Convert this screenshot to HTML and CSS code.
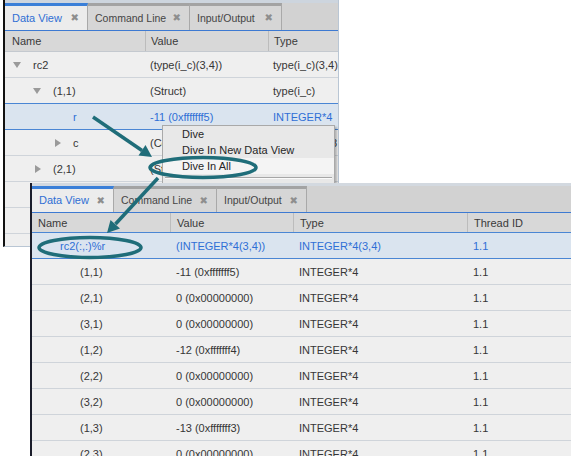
FILE: index.html
```html
<!DOCTYPE html>
<html>
<head>
<meta charset="utf-8">
<link rel="stylesheet" href="styles.css">
</head>
<body>
<div class="desk">
  <section class="win win-top">
    <div class="tabs">
      <div class="tab active w83"><span class="label">Data View</span><span class="x">&#x2716;</span></div>
      <div class="tab w102"><span class="label">Command Line</span><span class="x">&#x2716;</span></div>
      <div class="tab w92"><span class="label">Input/Output</span><span class="x">&#x2716;</span></div>
    </div>
    <div class="grid cols-top">
      <div class="row head"><div class="c name">Name</div><div class="c">Value</div><div class="c">Type</div></div>
      <div class="row"><div class="c name l0"><span class="tog"><i class="down"></i></span>rc2</div><div class="c">(type(i_c)(3,4))</div><div class="c">type(i_c)(3,4)</div></div>
      <div class="row"><div class="c name l1"><span class="tog"><i class="down"></i></span>(1,1)</div><div class="c">(Struct)</div><div class="c">type(i_c)</div></div>
      <div class="row sel"><div class="c name l2"><span class="tog"></span>r</div><div class="c">-11 (0xfffffff5)</div><div class="c">INTEGER*4</div></div>
      <div class="row"><div class="c name l2"><span class="tog"><i class="right"></i></span>c</div><div class="c">(Complex)</div><div class="c">COMPLEX*8</div></div>
      <div class="row"><div class="c name l1"><span class="tog"><i class="right"></i></span>(2,1)</div><div class="c">(Struct)</div><div class="c">type(i_c)</div></div>
      <div class="row"><div class="c name l1"><span class="tog"><i class="right"></i></span>(3,1)</div><div class="c">(Struct)</div><div class="c">type(i_c)</div></div>
      <div class="row"><div class="c name l1"><span class="tog"><i class="right"></i></span>(1,2)</div><div class="c">(Struct)</div><div class="c">type(i_c)</div></div>
      <div class="row"><div class="c name l1"><span class="tog"><i class="right"></i></span>(2,2)</div><div class="c">(Struct)</div><div class="c">type(i_c)</div></div>
    </div>
  </section>

  <div class="menu">
    <div class="item">Dive</div>
    <div class="item">Dive In New Data View</div>
    <div class="item hot">Dive In All</div>
    <div class="sep"></div>
    <div class="item">Dive in Nested</div>
  </div>

  <section class="win win-bottom">
    <div class="tabs">
      <div class="tab active w82"><span class="label">Data View</span><span class="x">&#x2716;</span></div>
      <div class="tab w103"><span class="label">Command Line</span><span class="x">&#x2716;</span></div>
      <div class="tab w90"><span class="label">Input/Output</span><span class="x">&#x2716;</span></div>
    </div>
    <div class="grid cols-bottom">
      <div class="row head"><div class="c name">Name</div><div class="c">Value</div><div class="c">Type</div><div class="c">Thread ID</div></div>
      <div class="row sel"><div class="c name b0">rc2(:,:)%r</div><div class="c">(INTEGER*4(3,4))</div><div class="c">INTEGER*4(3,4)</div><div class="c">1.1</div></div>
      <div class="row"><div class="c name b1">(1,1)</div><div class="c">-11 (0xfffffff5)</div><div class="c">INTEGER*4</div><div class="c">1.1</div></div>
      <div class="row"><div class="c name b1">(2,1)</div><div class="c">0 (0x00000000)</div><div class="c">INTEGER*4</div><div class="c">1.1</div></div>
      <div class="row"><div class="c name b1">(3,1)</div><div class="c">0 (0x00000000)</div><div class="c">INTEGER*4</div><div class="c">1.1</div></div>
      <div class="row"><div class="c name b1">(1,2)</div><div class="c">-12 (0xfffffff4)</div><div class="c">INTEGER*4</div><div class="c">1.1</div></div>
      <div class="row"><div class="c name b1">(2,2)</div><div class="c">0 (0x00000000)</div><div class="c">INTEGER*4</div><div class="c">1.1</div></div>
      <div class="row"><div class="c name b1">(3,2)</div><div class="c">0 (0x00000000)</div><div class="c">INTEGER*4</div><div class="c">1.1</div></div>
      <div class="row"><div class="c name b1">(1,3)</div><div class="c">-13 (0xfffffff3)</div><div class="c">INTEGER*4</div><div class="c">1.1</div></div>
      <div class="row"><div class="c name b1">(2,3)</div><div class="c">0 (0x00000000)</div><div class="c">INTEGER*4</div><div class="c">1.1</div></div>
    </div>
  </section>

  <svg class="annot" width="571" height="456" viewBox="0 0 571 456">
    <g fill="none" stroke="#1f6d79" stroke-width="3.5">
      <line x1="93" y1="117" x2="142" y2="150.5"/>
      <ellipse cx="203" cy="167.5" rx="53" ry="10"/>
      <line x1="158" y1="178" x2="115.5" y2="224"/>
      <ellipse cx="90" cy="247.5" rx="51" ry="10"/>
    </g>
    <g fill="#1f6d79">
      <polygon points="152,157 138.5,155.5 145.5,145"/>
      <polygon points="107,233 110.5,220 120,228.5"/>
    </g>
  </svg>
</div>
</body>
</html>
```

FILE: styles.css
```css
* { box-sizing: border-box; }
html, body { margin: 0; padding: 0; background: #ffffff; }
body {
  font-family: "Liberation Sans", Arial, sans-serif;
  font-size: 11px;
  color: #363636;
}
.desk {
  position: relative;
  width: 571px;
  height: 456px;
  overflow: hidden;
  background: #ffffff;
}

/* windows */
.win {
  position: absolute;
  overflow: hidden;
  background: #cdd5de;
  padding-top: 3px;
  display: flex;
  flex-direction: column;
}
.win-top {
  left: 3px;
  top: 0;
  width: 336px;
  height: 247px;
  border-left: 2px solid #111111;
  border-right: 1px solid #b9c6d4;
  border-bottom: 1px solid #b9c6d4;
}
.win-bottom {
  left: 30px;
  top: 183px;
  width: 541px;
  height: 273px;
  border-left: 2px solid #1a1c2a;
  background: #d3d9e0;
}

/* tabs */
.tabs {
  display: flex;
  height: 28px;
  flex: none;
  background: #d2d2d2;
  border-bottom: 1px solid #3d7ad2;
}
.win-bottom .tabs { height: 27px; }
.tab {
  display: flex;
  align-items: center;
  justify-content: space-between;
  padding: 0 8px 1px 7px;
  background: #d6d6d6;
  border-top: 3px solid #a3a3a3;
  border-right: 1px solid #a9a9a9;
  color: #454545;
  font-size: 10.5px;
}
.tab.active {
  background: #ececec;
  border-top-color: #3a7fd8;
  color: #2f6fd4;
  font-size: 11px;
}
.tab .x {
  font-family: "DejaVu Sans", sans-serif;
  font-size: 10px;
  color: #8e8e8e;
}
.w83 { width: 83px; }
.w102 { width: 102px; }
.w92 { width: 92px; }
.w82 { width: 82px; }
.w103 { width: 103px; }
.w90 { width: 90px; }

/* grid */
.grid {
  flex: 1;
  background: #efefef;
}
.row {
  display: grid;
  height: 26px;
  align-items: center;
  border-bottom: 1px solid #cfd4da;
  background: #efefef;
  white-space: nowrap;
}
.cols-top .row { grid-template-columns: 140px 123px 1fr; }
.cols-bottom .row { grid-template-columns: 138px 123px 174px 1fr; }
.row.head {
  height: 21px;
  background: #d8d8d8;
  border-bottom: 1px solid #c4c9cf;
  color: #3a3a3a;
  align-items: stretch;
}
.cols-bottom .row.head { height: 20px; border-bottom-color: #3d7ad2; }
.row.head .c {
  display: flex;
  align-items: center;
  border-left: 1px solid #bcbcbc;
}
.row.head .c.name { border-left: none; }
.c {
  padding-left: 5px;
  overflow: hidden;
  line-height: 16px;
}
.cols-bottom .c { padding-left: 6px; }
.c.name { padding-left: 7px; display: flex; align-items: center; }
.cols-bottom .c.name { padding-left: 6px; }

.row.sel {
  background: #dae4ef;
  border-bottom-color: #4a86d4;
  box-shadow: 0 -1px 0 #4a86d4;
  color: #2f6fd6;
}

/* tree indent */
.l0 { padding-left: 8px !important; }
.l1 { padding-left: 28px !important; }
.l2 { padding-left: 48px !important; }
.b0 { padding-left: 28px !important; }
.b1 { padding-left: 48px !important; }
.tog {
  display: inline-flex;
  align-items: center;
  width: 20px;
  height: 10px;
  flex: none;
}
.down {
  width: 0;
  height: 0;
  border-left: 4.5px solid transparent;
  border-right: 4.5px solid transparent;
  border-top: 6px solid #9a9a9a;
}
.right {
  width: 0;
  height: 0;
  margin-left: 2px;
  border-top: 4.5px solid transparent;
  border-bottom: 4.5px solid transparent;
  border-left: 6px solid #9a9a9a;
}

/* context menu */
.menu {
  position: absolute;
  left: 162px;
  top: 125px;
  width: 173px;
  height: 80px;
  background: #e8e8e8;
  border: 1px solid #a9a9a9;
  box-shadow: 2px 2px 2px rgba(0, 0, 0, 0.25);
  color: #262626;
  font-size: 11px;
}
.item {
  height: 16px;
  line-height: 16px;
  padding-left: 19px;
}
.item.hot { background: #f4f4f4; }
.sep {
  margin: 3px 2px 3px 2px;
  height: 2px;
  border-top: 1px solid #a6a6a6;
  border-bottom: 1px solid #fafafa;
}

.annot {
  position: absolute;
  left: 0;
  top: 0;
  pointer-events: none;
}
```
